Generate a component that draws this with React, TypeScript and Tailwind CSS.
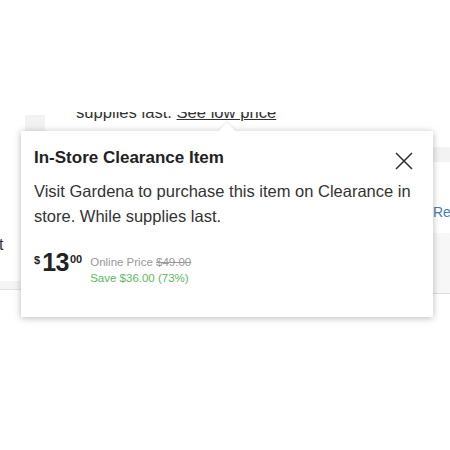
import React from 'react';

const CloseIcon = () => (
  <svg width="18" height="18" viewBox="0 0 18 18" fill="none" stroke="#333" strokeWidth="1.6">
    <path d="M1 1 L17 17 M17 1 L1 17" />
  </svg>
);

export default function App() {
  return (
    <div className="relative w-[450px] h-[450px] bg-white overflow-hidden font-['Liberation_Sans',Arial,sans-serif] text-[#333]">
      {/* page behind the popover */}
      <div className="flex items-start mt-[112px] h-[19px] overflow-hidden">
        <div className="ml-[25px] mt-[3px] w-[20px] h-[16px] bg-[#f2f2f2]" />
        <div className="ml-[31px] -mt-[9px] text-[16.6px] leading-[20px] whitespace-nowrap">
          supplies last. <span className="underline">See low price</span>
        </div>
      </div>

      <div className="flex">
        <div className="w-[22px] flex flex-col">
          <div className="h-[104px]" />
          <div className="text-[16px] leading-[20px] -ml-[1px] w-[10px] overflow-hidden">t</div>
          <div className="h-[26px]" />
          <div className="h-[9px] bg-[#f4f4f4] border-b border-[#e2e2e2]" />
        </div>
        <div className="flex-1" />
        <div className="w-[17px] flex flex-col">
          <div className="h-[16px]" />
          <div className="h-[15px] bg-[#f3f3f3]" />
          <div className="h-[42px]" />
          <div className="text-[14px] leading-[16px] text-[#4a7db5] whitespace-nowrap">Re</div>
          <div className="h-[13px]" />
          <div className="h-[61px] bg-[#f7f7f7] border-b border-[#dcdcdc]" />
        </div>
      </div>

      {/* popover */}
      <div className="absolute left-[21px] top-[131px] w-[412px] h-[186px] bg-white shadow-[0_1px_7px_rgba(0,0,0,0.28)]">
        <div className="absolute -top-[6px] left-[200px] w-[12px] h-[12px] bg-white rotate-45 shadow-[-1px_-1px_2px_rgba(0,0,0,0.08)]" />
        <div className="relative bg-white px-[13px] pt-[17px]">
          <div className="flex items-start justify-between">
            <h2 className="text-[17px] leading-[20px] font-bold text-[#222]">In-Store Clearance Item</h2>
            <button className="mt-[4px] mr-[7px]">
              <CloseIcon />
            </button>
          </div>
          <p className="mt-[9px] text-[16.5px] leading-[25px] text-[#333]">
            Visit Gardena to purchase this item on Clearance in store. While supplies last.
          </p>
          <div className="flex items-start mt-[20px]">
            <div className="flex items-start font-bold text-[#222]">
              <span className="text-[11px] leading-[14px] mt-[4px] mr-[2px]">$</span>
              <span className="text-[25px] leading-[26px] tracking-[-0.5px]">13</span>
              <span className="text-[11px] leading-[14px] mt-[3px] ml-[1px]">00</span>
            </div>
            <div className="ml-[8px] mt-[5px] text-[11.5px] leading-[16px]">
              <div className="text-[#999]">
                Online Price <span className="line-through">$49.00</span>
              </div>
              <div className="text-[#5cb85c]">Save $36.00 (73%)</div>
            </div>
          </div>
        </div>
      </div>
    </div>
  );
}
